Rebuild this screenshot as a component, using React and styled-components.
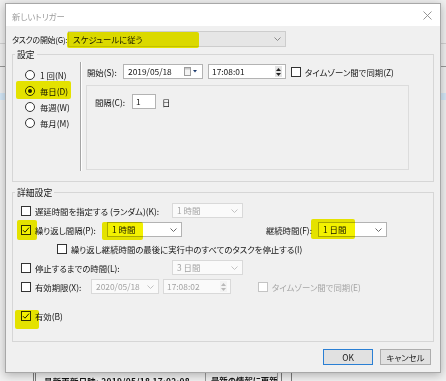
import React from "react";
import styled, { createGlobalStyle } from "styled-components";

const GlobalStyle = createGlobalStyle`
  html, body { margin: 0; padding: 0; }
  body {
    font-family: "Noto Sans CJK JP", "Noto Sans", sans-serif;
    font-size: 8.4px;
    font-feature-settings: "palt";
    color: #151515;
    background: #f0f0f0;
  }
  * { box-sizing: border-box; }
`;

/* ---------- desktop / background window ---------- */
const Desktop = styled.div`
  position: relative;
  width: 446px;
  height: 381px;
  overflow: hidden;
  background: #f0f0f0;
  display: flex;
  flex-direction: column;
`;

const BgRule = styled.div`
  margin-top: ${(p) => p.$top}px;
  height: ${(p) => p.$h || 1}px;
  background: ${(p) => p.$color};
`;

const BgStatus = styled.div`
  margin-top: auto;
  height: 8px;
  display: flex;
  align-items: flex-start;
  padding-left: 33px;
  overflow: visible;
`;

const BgBar = styled.div`
  width: 3px;
  height: 14px;
  border-left: 1px solid #7a7a7a;
  border-right: 1px solid #7a7a7a;
  margin-right: 8px;
`;

const BgText = styled.span`
  font-weight: bold;
  line-height: 14px;
  margin-top: 1px;
  white-space: nowrap;
  width: 161px;
  letter-spacing: 0.3px;
`;

const BgButton = styled.div`
  height: 14px;
  width: 73px;
  border: 1px solid #9a9a9a;
  border-top: none;
  padding-left: 5px;
  line-height: 14px;
  font-weight: bold;
  white-space: nowrap;
  overflow: hidden;
`;

const BgSep = styled.div`
  width: 11px;
  height: 14px;
  margin-left: 3px;
  border-left: 1px solid #7a7a7a;
  border-right: 1px solid #7a7a7a;
`;

/* ---------- dialog ---------- */
const Dialog = styled.div`
  position: absolute;
  left: 5px;
  top: 3px;
  width: 436px;
  height: 370px;
  border: 1px solid #a8a8a8;
  background: #f0f0f0;
  box-shadow: 0 2px 9px rgba(0, 0, 0, 0.28);
  display: flex;
  flex-direction: column;
`;

const TitleBar = styled.div`
  height: 22px;
  background: #fff;
  display: flex;
  align-items: center;
  padding: 0 8px 0 6px;
  color: #9a9a9a;
`;

const TitleText = styled.span`
  flex: 1;
  margin-top: 1px;
`;

const Body = styled.div`
  flex: 1;
  padding: 0 6px;
  display: flex;
  flex-direction: column;
`;

const Row = styled.div`
  display: flex;
  align-items: center;
  height: ${(p) => p.$h || 19}px;
  margin-top: ${(p) => p.$mt || 0}px;
  padding-left: ${(p) => p.$pl || 0}px;
  flex-shrink: 0;
`;

const Label = styled.span`
  display: block;
  width: ${(p) => (p.$w ? `${p.$w}px` : "auto")};
  flex-shrink: 0;
  white-space: nowrap;
  text-align: ${(p) => (p.$right ? "right" : "left")};
  padding-right: ${(p) => (p.$right ? 6 : 0)}px;
  padding-left: ${(p) => p.$pl || 0}px;
  color: ${(p) => (p.$disabled ? "#a6a6a6" : "inherit")};
  margin-left: ${(p) => p.$ml || 0}px;
  font-size: ${(p) => (p.$tight ? "8px" : "inherit")};
  letter-spacing: ${(p) => (p.$tight ? "-0.3px" : "normal")};
`;

const Field = styled.div`
  width: ${(p) => p.$w}px;
  height: ${(p) => p.$h || 15}px;
  flex-shrink: 0;
  display: flex;
  align-items: center;
  padding: 0 4px 0 ${(p) => p.$pl || 4}px;
  margin-right: ${(p) => p.$mr || 0}px;
  border: 1px solid
    ${(p) => (p.$disabled ? "#d9d9d9" : p.$gray ? "#cdcdcd" : "#b3b3b3")};
  background: ${(p) => (p.$gray ? "#e6e6e6" : p.$disabled ? "#fafafa" : "#fff")};
  color: ${(p) => (p.$disabled ? "#a3a3a3" : "#151515")};
`;

const FieldText = styled.span`
  flex: 1;
  white-space: nowrap;
  overflow: hidden;
  line-height: 1.2;
`;

const Spin = styled.div`
  width: 7px;
  height: 11px;
  display: flex;
  flex-direction: column;
  justify-content: center;
  align-items: center;
  gap: 2px;
  background: ${(p) => (p.$disabled ? "#f3f3f3" : "#e4e4e4")};
  margin-right: -1px;
`;

const Chevron = ({ color = "#6a6a6a" }) => (
  <svg width="7" height="4" viewBox="0 0 7 4">
    <path d="M0.5 0.5 L3.5 3.5 L6.5 0.5" fill="none" stroke={color} strokeWidth="1" />
  </svg>
);

const SpinArrows = ({ disabled }) => (
  <Spin $disabled={disabled}>
    <svg width="5" height="3" viewBox="0 0 5 3">
      <path d="M0 3 L2.5 0 L5 3 Z" fill={disabled ? "#b9b9b9" : "#222"} />
    </svg>
    <svg width="5" height="3" viewBox="0 0 5 3">
      <path d="M0 0 L2.5 3 L5 0 Z" fill={disabled ? "#b9b9b9" : "#222"} />
    </svg>
  </Spin>
);

const CalendarIcon = () => (
  <svg width="14" height="9" viewBox="0 0 14 9">
    <rect x="0.5" y="0.5" width="6" height="8" fill="#f4f4f4" stroke="#9c9c9c" />
    <rect x="1" y="1" width="5" height="1.5" fill="#c8c8c8" />
    <path d="M9 3 L13 3 L11 5.5 Z" fill="#1e3c6e" />
  </svg>
);

const Box = styled.span`
  width: 10px;
  height: 10px;
  flex-shrink: 0;
  display: inline-flex;
  align-items: center;
  justify-content: center;
  border: 1px solid ${(p) => (p.$disabled ? "#c4c4c4" : "#333")};
  background: #fff;
  margin-right: 4px;
  margin-left: ${(p) => p.$ml || 0}px;
`;

const Check = ({ checked, disabled, ml }) => (
  <Box $disabled={disabled} $ml={ml}>
    {checked && (
      <svg width="8" height="8" viewBox="0 0 8 8">
        <path d="M1 4.2 L3 6.2 L7 1.6" fill="none" stroke="#222" strokeWidth="1" />
      </svg>
    )}
  </Box>
);

const RadioCircle = styled.span`
  width: 10px;
  height: 10px;
  border-radius: 50%;
  border: 1px solid #333;
  background: #fff;
  display: inline-flex;
  align-items: center;
  justify-content: center;
  margin-right: 5px;
  flex-shrink: 0;
  &::after {
    content: "";
    width: 4px;
    height: 4px;
    border-radius: 50%;
    background: ${(p) => (p.$on ? "#222" : "transparent")};
  }
`;

/* ---------- group boxes ---------- */
const Group = styled.div`
  height: ${(p) => p.$h}px;
  margin-top: ${(p) => p.$mt}px;
  border: 1px solid #d6d6d6;
  display: flex;
  flex-direction: column;
  flex-shrink: 0;
`;

const Legend = styled.div`
  margin: -6px 0 0 2px;
  padding: 0 2px;
  line-height: 11px;
  height: 11px;
  width: fit-content;
  background: #f0f0f0;
  font-size: 8.8px;
`;

const ScheduleArea = styled.div`
  flex: 1;
  display: flex;
  padding: 2px 0 10px;
`;

const RadioCol = styled.div`
  width: 67px;
  padding: 5px 0 0 12px;
  display: flex;
  flex-direction: column;
`;

const Separator = styled.div`
  width: 2px;
  border-left: 1px solid #a5a5a5;
  border-right: 1px solid #ffffff;
`;

const RightCol = styled.div`
  flex: 1;
  padding: 2px 0 0 4px;
  display: flex;
  flex-direction: column;
`;

const Panel = styled.div`
  width: 323px;
  height: 85px;
  margin-top: 6px;
  border: 1px solid #dcdcdc;
  padding: 8px 0 0 8px;
`;

const DetailRows = styled.div`
  padding: 3px 0 0 8px;
  display: flex;
  flex-direction: column;
`;

const Buttons = styled.div`
  display: flex;
  justify-content: flex-end;
  gap: 7px;
  margin-top: 7px;
  padding-right: 3px;
`;

const Button = styled.div`
  width: ${(p) => p.$w}px;
  height: 16px;
  display: flex;
  align-items: center;
  justify-content: center;
  background: #e1e1e1;
  border: 1px solid ${(p) => (p.$primary ? "#2a7fd4" : "#adadad")};
`;

const Marker = styled.div`
  position: absolute;
  left: ${(p) => p.$x}px;
  top: ${(p) => p.$y}px;
  width: ${(p) => p.$w}px;
  height: ${(p) => p.$h}px;
  background: #f3f100;
  mix-blend-mode: multiply;
  border-radius: 2px;
  pointer-events: none;
`;

const radios = [
  { label: "1 回(N)", on: false },
  { label: "毎日(D)", on: true },
  { label: "毎週(W)", on: false },
  { label: "毎月(M)", on: false },
];

export default function App() {
  return (
    <>
      <GlobalStyle />
      <Desktop>
        <BgRule $top={43} $color="#d2d2d2" />
        <BgRule $top={22} $color="#9a9a9a" />
        <BgRule $top={26} $h={7} $color="#d4e8f8" />
        <BgStatus>
          <BgBar />
          <BgText>最新更新日時: 2019/05/18 17:02:08</BgText>
          <BgButton>最新の情報に更新</BgButton>
          <BgSep />
        </BgStatus>

        <Dialog>
          <TitleBar>
            <TitleText>新しいトリガー</TitleText>
            <svg width="9" height="9" viewBox="0 0 9 9">
              <path d="M0.5 0.5 L8.5 8.5 M8.5 0.5 L0.5 8.5" stroke="#8a8a8a" strokeWidth="0.9" />
            </svg>
          </TitleBar>
          <Body>
            <Row $h={16} $mt={5}>
              <Label $w={56} $tight>タスクの開始(G):</Label>
              <Field $w={218} $h={16} $gray>
                <FieldText>スケジュールに従う</FieldText>
                <Chevron color="#8a8a8a" />
              </Field>
            </Row>

            <Group $h={128} $mt={7}>
              <Legend>設定</Legend>
              <ScheduleArea>
                <RadioCol>
                  {radios.map((r) => (
                    <Row key={r.label} $h={16}>
                      <RadioCircle $on={r.on} />
                      <span>{r.label}</span>
                    </Row>
                  ))}
                </RadioCol>
                <Separator />
                <RightCol>
                  <Row $h={15}>
                    <Label $w={37} $pl={1}>開始(S):</Label>
                    <Field $w={80} $mr={5}>
                      <FieldText>2019/05/18</FieldText>
                      <CalendarIcon />
                    </Field>
                    <Field $w={78} $mr={5} $pl={3}>
                      <FieldText>17:08:01</FieldText>
                      <SpinArrows />
                    </Field>
                    <Check />
                    <Label>タイムゾーン間で同期(Z)</Label>
                  </Row>
                  <Panel>
                    <Row $h={15}>
                      <Label $w={37}>間隔(C):</Label>
                      <Field $w={24} $mr={6} $pl={3}>
                        <FieldText>1</FieldText>
                      </Field>
                      <Label>日</Label>
                    </Row>
                  </Panel>
                </RightCol>
              </ScheduleArea>
            </Group>

            <Group $h={150} $mt={10}>
              <Legend>詳細設定</Legend>
              <DetailRows>
                <Row>
                  <Check />
                  <Label $w={137}>遅延時間を指定する (ランダム)(K):</Label>
                  <Field $w={71} $disabled>
                    <FieldText>1 時間</FieldText>
                    <Chevron color="#c2c2c2" />
                  </Field>
                </Row>
                <Row>
                  <Check checked />
                  <Label $w={72}>繰り返し間隔(P):</Label>
                  <Field $w={75}>
                    <FieldText>1 時間</FieldText>
                    <Chevron />
                  </Field>
                  <Label $w={136} $right>継続時間(F):</Label>
                  <Field $w={69}>
                    <FieldText>1 日間</FieldText>
                    <Chevron />
                  </Field>
                </Row>
                <Row>
                  <Check ml={36} />
                  <Label>繰り返し継続時間の最後に実行中のすべてのタスクを停止する(I)</Label>
                </Row>
                <Row>
                  <Check />
                  <Label $w={137}>停止するまでの時間(L):</Label>
                  <Field $w={71} $disabled>
                    <FieldText>3 日間</FieldText>
                    <Chevron color="#c2c2c2" />
                  </Field>
                </Row>
                <Row>
                  <Check />
                  <Label $w={56}>有効期限(X):</Label>
                  <Field $w={68} $mr={4} $disabled>
                    <FieldText>2020/05/18</FieldText>
                    <Chevron color="#c2c2c2" />
                  </Field>
                  <Field $w={68} $mr={27} $pl={3} $disabled>
                    <FieldText>17:08:02</FieldText>
                    <SpinArrows disabled />
                  </Field>
                  <Check disabled />
                  <Label $disabled>タイムゾーン間で同期(E)</Label>
                </Row>
                <Row $mt={10}>
                  <Check checked />
                  <Label>有効(B)</Label>
                </Row>
              </DetailRows>
            </Group>

            <Buttons>
              <Button $w={50} $primary>OK</Button>
              <Button $w={51}>キャンセル</Button>
            </Buttons>
          </Body>
        </Dialog>

        <Marker $x={67} $y={32} $w={132} $h={16} />
        <Marker $x={16} $y={81} $w={55} $h={18} />
        <Marker $x={17} $y={220} $w={20} $h={20} />
        <Marker $x={102} $y={222} $w={41} $h={18} />
        <Marker $x={311} $y={219} $w={44} $h={20} />
        <Marker $x={15} $y={310} $w={24} $h={19} />
      </Desktop>
    </>
  );
}
